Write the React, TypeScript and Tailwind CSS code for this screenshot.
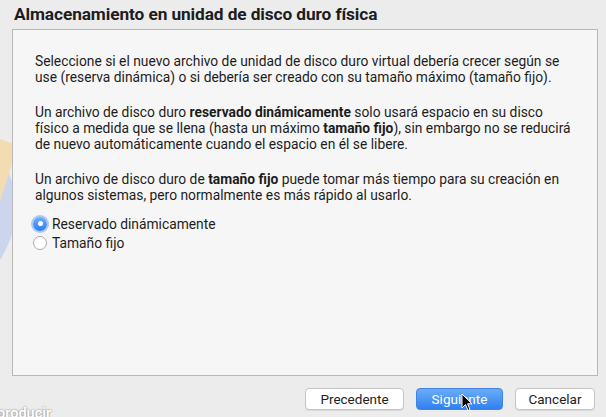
import React from "react"

function Radio({ checked, label }: { checked?: boolean; label: string }) {
  return (
    <label className="flex items-center gap-[5px] h-[19px]">
      {checked ? (
        <span className="w-[14px] h-[14px] rounded-full flex items-center justify-center bg-gradient-to-b from-[#6cb0fb] to-[#2a7cf0] shadow-[0_0_0_2px_rgba(110,160,240,0.55)]">
          <span className="w-[5px] h-[5px] rounded-full bg-white" />
        </span>
      ) : (
        <span className="w-[14px] h-[14px] rounded-full bg-white border border-[#a9a9a9]" />
      )}
      <span>{label}</span>
    </label>
  )
}

export default function App() {
  return (
    <div
      className="relative w-[606px] h-[417px] overflow-hidden bg-[#ececec] text-[#1d1d1d]"
      style={{ fontFamily: "Roboto, 'Liberation Sans', sans-serif" }}
    >
      {/* watermark behind the panel */}
      <div className="absolute left-[-500px] top-[58px] w-[516px] h-[300px] rounded-[50%] bg-[#cbd6ec]" />
      <div className="absolute left-[-14px] top-[140px] w-[22px] h-[70px] rotate-[18deg] bg-[#f3dcb2]" />

      <div className="relative flex flex-col h-full">
        <h1 className="pl-[14px] pt-[2px] h-[29px] text-[17.3px] font-bold tracking-[-0.1px]">
          Almacenamiento en unidad de disco duro física
        </h1>

        <div className="mx-[12px] w-[586px] h-[347px] border border-[#b8b8b8] bg-[#f6f6f6] pl-[22px] pr-[4px] pt-[23px] text-[13.8px] leading-[16px] whitespace-nowrap">
          <p>
            Seleccione si el nuevo archivo de unidad de disco duro virtual debería crecer según se
            <br />
            use (reserva dinámica) o si debería ser creado con su tamaño máximo (tamaño fijo).
          </p>
          <p className="mt-[19px]">
            Un archivo de disco duro <b>reservado dinámicamente</b> solo usará espacio en su disco
            <br />
            físico a medida que se llena (hasta un máximo <b>tamaño fijo</b>), sin embargo no se reducirá
            <br />
            de nuevo automáticamente cuando el espacio en él se libere.
          </p>
          <p className="mt-[19px]">
            Un archivo de disco duro de <b>tamaño fijo</b> puede tomar más tiempo para su creación en
            <br />
            algunos sistemas, pero normalmente es más rápido al usarlo.
          </p>
          <div className="mt-[11px] -ml-[2px] flex flex-col">
            <Radio checked label="Reservado dinámicamente" />
            <Radio label="Tamaño fijo" />
          </div>
        </div>

        <div className="flex justify-end gap-[12px] pr-[11px] pt-[12px] text-[13.5px]">
          <button className="w-[99px] h-[22px] rounded-[4px] bg-white border border-[#c4c4c4] shadow-[0_1px_0_rgba(0,0,0,0.08)]">
            Precedente
          </button>
          <button className="w-[87px] h-[22px] rounded-[4px] text-white bg-gradient-to-b from-[#6aacf8] to-[#2f80f0] border border-[#3d84e6]">
            Siguiente
          </button>
          <button className="w-[80px] h-[22px] rounded-[4px] bg-white border border-[#c4c4c4] shadow-[0_1px_0_rgba(0,0,0,0.08)]">
            Cancelar
          </button>
        </div>
      </div>

      {/* desktop label peeking below the window */}
      <div
        className="absolute left-[-3px] top-[403px] text-[14.5px] text-white font-semibold"
        style={{ textShadow: "0 0 2px rgba(0,0,0,0.55)" }}
      >
        producir
      </div>

      {/* mouse cursor */}
      <svg className="absolute left-[461px] top-[393px]" width="12" height="19" viewBox="0 0 12 19">
        <path d="M1 1 L1 15 L4.5 11.5 L7 17.5 L9 16.6 L6.6 10.8 L11 10.8 Z" fill="#000" stroke="#fff" strokeWidth="1" strokeLinejoin="round" />
      </svg>
    </div>
  )
}
